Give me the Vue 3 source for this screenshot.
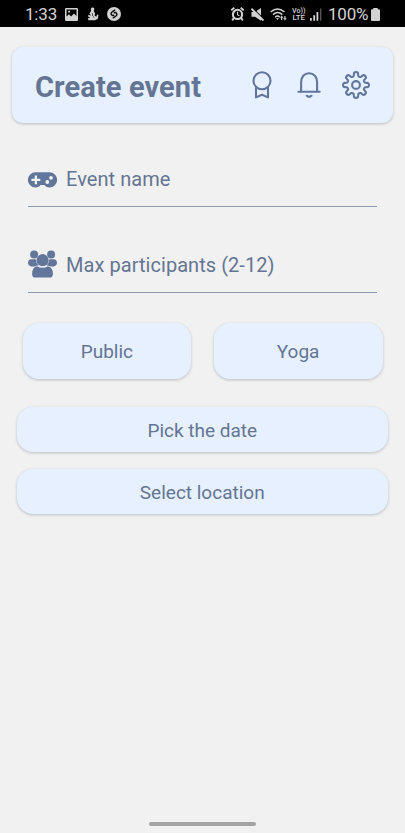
<script setup>
const gearPoints = Array.from({ length: 192 }, (_, i) => {
  const a = (i / 192) * Math.PI * 2
  const wave = Math.cos(8 * a)
  const r = 10.9 + 2.0 * Math.tanh(2.2 * wave) / Math.tanh(2.2)
  return `${(14 + r * Math.cos(a)).toFixed(2)},${(14 + r * Math.sin(a)).toFixed(2)}`
}).join(' ')
</script>

<template>
  <div class="screen">
    <div class="status">
      <span class="clock">1:33</span>
      <svg class="s-picture" width="13" height="13" viewBox="0 0 13 13">
        <path fill-rule="evenodd" d="M1.2 0H11.8Q13 0 13 1.2V11.8Q13 13 11.8 13H1.2Q0 13 0 11.8V1.2Q0 0 1.2 0ZM1.5 1.5V8.6L4 6.3 6.1 8.5 9 5.5 11.5 8V1.5ZM3.2 2.8H5V4.6H3.2Z" />
      </svg>
      <svg class="s-figure" width="12" height="14" viewBox="0 0 12 14">
        <path d="M5 .5Q7.8 0 7.3 2.6L6.7 4 8 6.3 7.6 8.5 9.4 9.8 10 7.5 11.5 8 10.8 11.7 8 13.2H1.6L.7 11.6 3.2 10.7 1 9.3 1.3 7.9 4 8.4 2.5 6.5 4.2 3.8Q3.2 1.2 5 .5Z" />
        <path d="M5.2 6L5.8 9.2 7.5 10.8" stroke="#000" stroke-width=".6" fill="none" />
      </svg>
      <svg class="s-shazam" width="14" height="14" viewBox="0 0 14 14">
        <circle cx="7" cy="7" r="7" />
        <path d="M7.8 3.1L5 5Q3.3 6.5 4.7 8.1 5.6 8.9 6.8 8.1M6.2 10.9L9 9Q10.7 7.5 9.3 5.9 8.4 5.1 7.2 5.9" fill="none" stroke="#000" stroke-width="1.3" stroke-linecap="round" />
      </svg>
      <span class="spacer"></span>
      <svg class="s-alarm" width="13" height="14" viewBox="0 0 13 14">
        <circle cx="6.5" cy="7.4" r="4.6" fill="none" stroke="#d2d2d2" stroke-width="2.1" />
        <path d="M.2 3.3L3.3.7M12.8 3.3L9.7.7M2.8 11.2L1.2 13.3M10.2 11.2L11.8 13.3" stroke="#d2d2d2" stroke-width="1.9" />
        <path d="M6.5 4.8V7.7L8.5 8.9" fill="none" stroke="#d2d2d2" stroke-width="1.1" />
      </svg>
      <svg class="s-mute" width="13" height="13" viewBox="0 0 13 13">
        <path d="M.5 4H4L10 0V12.7L4 8.8H.5Z" />
        <path d="M1.4 0L13 11.3" stroke="#000" stroke-width="1.1" />
        <path d="M.4.8L12.4 12.5" stroke="#d2d2d2" stroke-width="1.9" />
      </svg>
      <svg class="s-wifi" width="17" height="13" viewBox="0 0 17 13">
        <path d="M.7 4Q7.5-2 14.5 4M3 6.6Q7.6 2.5 12.3 6.6M5.2 9.2Q7.5 7 9.8 9.2" fill="none" stroke="#d2d2d2" stroke-width="1.45" />
        <path d="M6 10.2H9L7.5 12ZM10 9.8L11.7 7.6 13.3 9.8H12.3V12H11V9.8ZM13.3 10.2H14.3V8H15.5V10.2H16.6L14.9 12.4Z" />
      </svg>
      <svg class="s-volte" width="15" height="22" viewBox="0 0 15 22">
        <text x="0" y="9.6" textLength="13.5" lengthAdjust="spacingAndGlyphs">Vo))</text>
        <text x="0.5" y="17.4" textLength="12.5" lengthAdjust="spacingAndGlyphs">LTE</text>
      </svg>
      <svg class="s-signal" width="12" height="13" viewBox="0 0 12 13">
        <path d="M0 10H1.8V12.7H0ZM3.3 7.3H5.1V12.7H3.3ZM6.5 4H8.3V12.7H6.5Z" />
        <path d="M10 .5H11.4V12.7H10Z" opacity=".4" />
      </svg>
      <span class="percent">100%</span>
      <svg class="s-battery" width="9" height="13" viewBox="0 0 9 13">
        <path d="M2.3 0H6.7V1.3H8Q9 1.3 9 2.3V12Q9 13 8 13H1Q0 13 0 12V2.3Q0 1.3 1 1.3H2.3Z" />
      </svg>
    </div>

    <header class="card header">
      <h1>Create event</h1>
      <div class="actions">
        <svg width="20" height="28" viewBox="0 0 20 28">
          <circle cx="10" cy="9.7" r="8.5" />
          <path d="M4 16.6V26.4L10 23.8 16 26.4V16.6" />
        </svg>
        <svg width="24" height="28" viewBox="0 0 24 28">
          <path d="M1.5 20.8H22.7M4.1 20.5V11.2C4.1 6 7.3 2.3 12.1 2.3S20.1 6 20.1 11.2V20.5" />
          <path d="M9.8 24.8Q12.1 27 14.4 24.8" />
        </svg>
        <svg width="28" height="28" viewBox="0 0 28 28">
          <polygon :points="gearPoints" />
          <circle cx="14" cy="14" r="3.9" />
        </svg>
      </div>
    </header>

    <div class="field">
      <svg width="29" height="28" viewBox="0 0 29 28">
        <path fill-rule="evenodd" d="M7.5 6.3H21.5A7.6 7.6 0 0 1 21.5 21.5C18.8 21.5 17.4 20.2 16.5 19H12.5C11.6 20.2 10.2 21.5 7.5 21.5A7.6 7.6 0 0 1 7.5 6.3ZM6.7 9.4V12.7H3.4V15H6.7V18.3H9V15H12.3V12.7H9V9.4ZM19.3 14.1A1.9 1.9 0 1 0 19.3 17.9A1.9 1.9 0 1 0 19.3 14.1ZM23 9.9A1.9 1.9 0 1 0 23 13.7A1.9 1.9 0 1 0 23 9.9Z" />
      </svg>
      <span>Event name</span>
    </div>
    <div class="field second">
      <svg width="29" height="28" viewBox="0 0 29 28">
        <circle cx="6.1" cy="4.5" r="4" />
        <circle cx="23.1" cy="4.5" r="4" />
        <path d="M3.4 9.2H7.8Q8.2 13.4 10.6 15.4Q8.2 15.4 6.4 16.4H3Q0 15.7 0 12.8 0 9.6 3.4 9.2ZM25.6 9.2H21.4Q21 13.4 18.6 15.4Q21 15.4 22.8 16.4H26Q29 15.7 29 12.8 29 9.6 25.6 9.2Z" />
        <circle cx="14.6" cy="10.2" r="6.1" />
        <path d="M9.1 16.2Q14.5 19.3 19.9 16.2Q24.9 17.2 24.9 23.7 24.9 27.6 21.5 27.6H7.5Q4.1 27.6 4.1 23.7 4.1 17.2 9.1 16.2Z" />
      </svg>
      <span>Max participants (2-12)</span>
    </div>

    <div class="pair">
      <button class="card">Public</button>
      <button class="card">Yoga</button>
    </div>
    <div class="stack">
      <button class="card">Pick the date</button>
      <button class="card">Select location</button>
    </div>
    <div class="home"></div>
  </div>
</template>

<style>
body {
  background: #f1f1f1;
}
</style>

<style scoped>
.screen {
  box-sizing: border-box;
  width: 405px;
  height: 833px;
  display: flex;
  flex-direction: column;
  overflow: hidden;
  background: #f1f1f1;
  color: #647593;
  font-family: Roboto, sans-serif;
}
.status {
  box-sizing: border-box;
  flex: none;
  height: 27px;
  display: flex;
  align-items: center;
  padding: 1px 25px 0 25px;
  background: #000;
  color: #d2d2d2;
  fill: #d2d2d2;
  white-space: nowrap;
}
.status svg {
  flex: none;
}
.clock {
  width: 40px;
  font-size: 17px;
  letter-spacing: -0.2px;
}
.s-figure {
  margin-left: 9px;
}
.s-shazam {
  margin-left: 8px;
}
.spacer {
  flex: 1;
}
.s-alarm {
  margin-right: 1px;
}
.s-mute {
  margin-left: 6px;
}
.s-wifi {
  margin-left: 6px;
}
.s-volte {
  margin-left: 5px;
  font-size: 7.2px;
  font-weight: 500;
}
.s-signal {
  margin-left: 3px;
}
.percent {
  width: 41px;
  margin-left: 6px;
  font-size: 17px;
  letter-spacing: -0.2px;
}
.s-battery {
  margin-left: 2px;
}
.card {
  border: 0;
  background: #e6f0ff;
  box-shadow: 0 1px 3px rgba(70, 80, 100, 0.32);
}
.header {
  box-sizing: border-box;
  flex: none;
  display: flex;
  align-items: center;
  justify-content: space-between;
  height: 76px;
  margin: 20px 12.5px 0 12px;
  padding: 0 23px 0 23px;
  border-radius: 11px;
}
h1 {
  margin: 3px 0 0;
  font-size: 29px;
  line-height: 34px;
  font-weight: 700;
  letter-spacing: 0.1px;
  white-space: nowrap;
}
.actions {
  display: flex;
  gap: 25px;
  fill: none;
  stroke: #61769a;
  stroke-width: 2.1;
  stroke-linejoin: round;
  stroke-linecap: round;
}
.actions svg:last-child {
  margin-left: -4px;
}
.field {
  box-sizing: border-box;
  flex: none;
  display: flex;
  align-items: center;
  gap: 9px;
  height: 57px;
  margin: 27px 28px 0;
  padding-bottom: 1px;
  border-bottom: 1.5px solid #8d9aae;
  font-size: 20px;
  letter-spacing: 0.05px;
  white-space: nowrap;
}
.field span {
  padding-top: 2px;
}
.second {
  margin-top: 29px;
}
.field svg {
  flex: none;
  margin-top: 1px;
  fill: #61769a;
}
.field:not(.second) svg {
  margin-top: 5px;
}
.pair {
  flex: none;
  display: flex;
  gap: 22.5px;
  margin: 29.5px 22.5px 0 22.5px;
}
button {
  padding: 2px 0 0;
  color: #647593;
  font: 19px Roboto, sans-serif;
}
.pair button {
  flex: 1;
  height: 56.5px;
  border-radius: 16px;
}
.stack {
  flex: none;
  display: flex;
  flex-direction: column;
  gap: 17px;
  margin: 28px 17px 0 16.5px;
}
.stack button {
  height: 45px;
  border-radius: 16px;
}
.home {
  flex: none;
  width: 107px;
  height: 4px;
  margin: auto auto 7px;
  border-radius: 2px;
  background: #a3a3a3;
}
</style>
